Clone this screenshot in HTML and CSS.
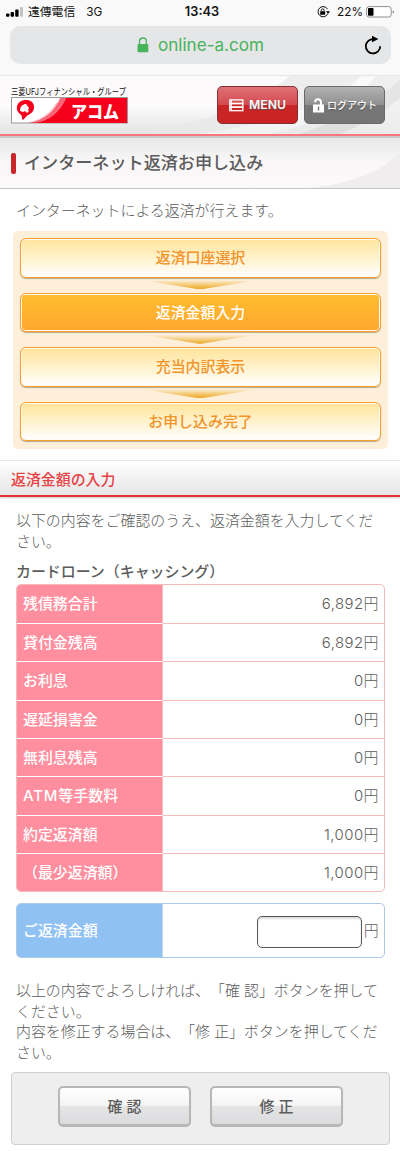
FILE: index.html
```html
<!DOCTYPE html>
<html lang="ja">
<head>
    <meta charset="UTF-8">
    <meta name="viewport" content="width=device-width, initial-scale=1.0">
    <title>インターネット返済お申し込み</title>
    <link rel="stylesheet" href="styles.css">
</head>
<body>

    <!-- Phone status bar -->
    <div class="status">
        <div class="status-left">
            <svg width="18" height="10" viewBox="0 0 18 10">
                <rect x="0" y="6.5" width="3.4" height="3.2" rx="1"/>
                <rect x="4.6" y="5" width="3.4" height="4.7" rx="1"/>
                <rect x="9.2" y="2.5" width="3.4" height="7.2" rx="1"/>
                <rect x="14" y="0" width="3" height="9.7" rx="1" fill="#c4c4c4"/>
            </svg>
            <span class="carrier">遠傳電信</span>
            <span>3G</span>
        </div>
        <div class="clock">13:43</div>
        <div class="status-right">
            <svg width="13" height="12" viewBox="0 0 13 12">
                <path d="M10.6 3.2A5.1 5.1 0 1 0 10.7 8" fill="none" stroke="#111" stroke-width="1"/>
                <path d="M9 5.2h4l-2 2.8z"/>
                <rect x="3.2" y="5.2" width="5" height="3.6" rx=".4"/>
                <path d="M4.3 5.3V4.2a1.4 1.4 0 0 1 2.8 0v1.1" fill="none" stroke="#111" stroke-width=".9"/>
            </svg>
            <span class="percent">22%</span>
            <svg width="29" height="12" viewBox="0 0 29 12">
                <rect x=".6" y=".6" width="24.6" height="10.4" rx="2.5" fill="#fff" stroke="#8f8f8f" stroke-width="1"/>
                <rect x="2" y="2" width="5.5" height="7.8" rx=".8"/>
                <path d="M26.6 4.2q1.5.5 1.5 1.7t-1.5 1.7z" fill="#999"/>
            </svg>
        </div>
    </div>

    <div class="browser">
        <div class="url">
            <svg class="lock" width="12" height="16" viewBox="0 0 12 16">
                <path d="M2.5 8V4.4a3.4 3.4 0 0 1 6.8 0V8" fill="none" stroke="#47b35b" stroke-width="1.3"/>
                <rect x=".5" y="7" width="10.8" height="8.2" rx="1.2" fill="#47b35b"/>
            </svg>
            <span>online-a.com</span>
            <svg class="reload" width="18" height="20" viewBox="0 0 18 20">
                <path d="M9.6 4.1A7.2 7.2 0 1 0 16.2 11.3" fill="none" stroke="#000" stroke-width="1.8"/>
                <path d="M8 .7L14.4 4 8 7.3z"/>
            </svg>
        </div>
    </div>

    <header class="header">
        <svg class="header-bg" width="400" height="58" viewBox="0 0 400 58" preserveAspectRatio="none">
            <defs>
                <linearGradient id="swoosh" x1="0" y1="0" x2="1" y2="1">
                    <stop offset="0" stop-color="#dedede"/>
                    <stop offset="1" stop-color="#f2f2f2"/>
                </linearGradient>
            </defs>
            <path d="M130 58Q240 43 290 0H400V58z" fill="url(#swoosh)"/>
            <path d="M200 58Q320 40 362 0H376Q340 43 270 58z" fill="#fafafa"/>
            <path d="M300 58Q365 35 400 4V22Q370 47 340 58z" fill="#d8d8d8"/>
        </svg>
        <svg class="logo" width="117" height="38" viewBox="0 0 117 38">
            <text class="logo-group" x="0" y="9" textLength="115" lengthAdjust="spacingAndGlyphs">三菱UFJフィナンシャル・グループ</text>
            <rect x=".5" y="11.5" width="116" height="25.5" fill="#fff" stroke="#999"/>
            <path d="M55 12h61v25H24Q46 33 55 12z" fill="#f7001c"/>
            <path d="M49 12h6Q46 33 24 37h-5Q42 32 49 12z" fill="#f7001c" opacity=".6"/>
            <path d="M45 17h3Q40 32 22 37h-6Q37 32 45 17z" fill="#f7001c" opacity=".25"/>
            <path d="M12 34C10 32 12 30 9 28 3 23 6 14 15 14c10 0 10 11 4 14-3 1-4 3-7 6z" fill="#f7001c"/>
            <path d="M9 25c0-5 3-7 6-7l3 4-1 2 1 1-2 2-2-2-2 1z" fill="#fff"/>
            <text class="logo-name" x="60" y="31.5" textLength="48" lengthAdjust="spacingAndGlyphs">アコム</text>
        </svg>
        <a class="nav-btn menu" href="#">
            <svg width="15" height="13" viewBox="0 0 15 13">
                <g fill="none" stroke="#fff" stroke-width="1.3">
                    <rect x=".8" y=".9" width="13" height="3.6"/>
                    <rect x=".8" y="4.5" width="13" height="3.6"/>
                    <rect x=".8" y="8.1" width="13" height="3.6"/>
                    <path d="M2.2 1v11"/>
                </g>
            </svg>
            <span>MENU</span>
        </a>
        <a class="nav-btn logout" href="#">
            <svg width="13" height="15" viewBox="0 0 13 15">
                <path d="M3 4.2Q3.2 1.2 6 1.2t3 3v3" fill="none" stroke="#fff" stroke-width="2"/>
                <rect x="1" y="6.5" width="11" height="8" fill="#fff"/>
                <path d="M6.5 8.5v4" stroke="#777" stroke-width="1.4"/>
            </svg>
            <span>ログアウト</span>
        </a>
    </header>

    <div class="title-bar">
        <svg class="title-bg" width="90" height="50" viewBox="0 0 90 50">
            <path d="M0 50Q68 42 90 13V50z" fill="#efeded"/>
        </svg>
        <h1>インターネット返済お申し込み</h1>
    </div>

    <p class="lead">インターネットによる返済が行えます。</p>

    <ol class="steps">
        <li>返済口座選択</li>
        <li class="current">返済金額入力</li>
        <li>充当内訳表示</li>
        <li>お申し込み完了</li>
    </ol>

    <h2>返済金額の入力</h2>

    <section>
        <p>以下の内容をご確認のうえ、返済金額を入力してください。</p>
        <h3>カードローン（キャッシング）</h3>

        <dl class="table">
            <div><dt>残債務合計</dt><dd>6,892円</dd></div>
            <div><dt>貸付金残高</dt><dd>6,892円</dd></div>
            <div><dt>お利息</dt><dd>0円</dd></div>
            <div><dt>遅延損害金</dt><dd>0円</dd></div>
            <div><dt>無利息残高</dt><dd>0円</dd></div>
            <div><dt><span class="latin">ATM</span>等手数料</dt><dd>0円</dd></div>
            <div><dt>約定返済額</dt><dd>1,000円</dd></div>
            <div><dt>（最少返済額）</dt><dd>1,000円</dd></div>
        </dl>

        <dl class="table amount">
            <div><dt>ご返済金額</dt><dd><input type="text" name="amount">円</dd></div>
        </dl>

        <p class="note">以上の内容でよろしければ、「確 認」ボタンを押して<br>ください。<br>内容を修正する場合は、「修 正」ボタンを押してくだ<br>さい。</p>
    </section>

    <div class="buttons">
        <button type="button" class="btn">確 認</button>
        <button type="button" class="btn">修 正</button>
    </div>

</body>
</html>
```
FILE: styles.css
```css
* {
    box-sizing: border-box;
}
body {
    margin: 0;
    width: 400px;
    height: 1151px;
    overflow: hidden;
    background: #fff;
    color: #5c5c5c;
    font-family: Inter, "Noto Sans CJK JP", sans-serif;
    font-size: 14.93px;
    font-weight: 300;
    line-height: 20.4px;
    text-spacing-trim: space-all;
}
h1, h2, h3, p, ol, dl, dd {
    margin: 0;
    padding: 0;
}
svg {
    display: block;
    flex: none;
}

/* Status bar */
.status {
    height: 26px;
    padding: 0 5px 3px 6px;
    display: grid;
    grid-template-columns: 1fr auto 1fr;
    align-items: center;
    background: #f9f9f9;
    color: #111;
    font-size: 11.8px;
    font-weight: 400;
    line-height: 20px;
}
.status-left, .status-right {
    display: flex;
    align-items: center;
}
.carrier {
    margin: 0 11px 0 4px;
}
.clock {
    padding-left: 3px;
    font-size: 12.8px;
    font-weight: 600;
}
.status-right {
    justify-content: flex-end;
}
.percent {
    margin: 0 3px 0 7px;
}

/* Address bar */
.browser {
    height: 50px;
    padding: 0 9px 0 10px;
    background: #f9f9f9;
    border-bottom: 1px solid #e6e6e8;
}
.url {
    position: relative;
    height: 38px;
    display: flex;
    align-items: center;
    justify-content: center;
    border-radius: 10px;
    background: #e5e6e8;
    color: #47b35b;
    font-size: 17.1px;
    font-weight: 400;
}
.lock {
    margin-right: 9px;
}
.reload {
    position: absolute;
    right: 9px;
    top: 9px;
}

/* Header */
.header {
    position: relative;
    height: 62px;
    padding: 10px 15px 0 11px;
    display: flex;
    align-items: flex-start;
    background: linear-gradient(#fcfafb 50%, #e4e4e4 58px);
    border-bottom: 2px solid #c9c9cb;
    box-shadow: inset 0 -2px #fb7580;
}
.header-bg {
    position: absolute;
    left: 0;
    top: 0;
    opacity: .6;
}
.logo {
    position: relative;
    margin-right: auto;
    overflow: visible;
}
.logo-group {
    font-size: 9px;
    font-weight: 400;
    fill: #111;
}
.logo-name {
    font-size: 17px;
    font-weight: 900;
    fill: #fff;
}
.nav-btn {
    position: relative;
    width: 81px;
    height: 38px;
    display: flex;
    align-items: center;
    justify-content: center;
    gap: 5px;
    border-radius: 5px;
    color: #fff;
    font-size: 11.5px;
    font-weight: 700;
    text-decoration: none;
    text-shadow: 0 1px 1px #555;
}
.menu {
    margin-right: 6px;
    border: 1px solid #813136;
    background: linear-gradient(#df7277, #d3494e 50%, #c92527 50%, #ca2324);
    font-size: 12.2px;
    font-weight: 600;
}
.logout {
    border: 1px solid #6a6a6a;
    background: linear-gradient(#b3b3b3, #8f8f8f 50%, #777 50%, #747474);
    font-size: 10px;
    font-weight: 500;
    gap: 2px;
}

/* Page title */
.title-bar {
    position: relative;
    height: 51px;
    padding-left: 11px;
    display: flex;
    align-items: center;
    background: linear-gradient(#e8e8e8, #f8f6f7 45%, #fbf9fa);
    border-bottom: 1px solid #c6c6c8;
}
.title-bg {
    position: absolute;
    right: 0;
    bottom: 0;
}
h1 {
    position: relative;
    display: flex;
    align-items: center;
    font-size: 17.1px;
    font-weight: 500;
    line-height: 22px;
}
h1::before {
    content: "";
    width: 5px;
    height: 21px;
    margin-right: 8px;
    border-radius: 2px;
    background: #c9262a;
}
.lead {
    padding: 12px 16px 0;
}

/* Steps */
.steps {
    width: 375px;
    height: 218px;
    margin: 10px 0 0 13px;
    padding: 7px 7px 0;
    border-radius: 5px;
    background: #fdefd9;
    list-style: none;
}
.steps li {
    position: relative;
    height: 39.6px;
    margin-bottom: 14.9px;
    border: 1px solid #f5a02c;
    border-radius: 6px;
    background: linear-gradient(#ffe499, #fff);
    box-shadow: inset 0 0 0 1px #fffaf0, 0 1px 1px #b9a98d;
    color: #f0942b;
    font-weight: 500;
    line-height: 39.8px;
    text-align: center;
}
.steps li.current {
    background: linear-gradient(#ffbd30, #ffa62e);
    color: #fff;
}
.steps li:not(:last-child)::after {
    content: "";
    position: absolute;
    left: 124px;
    top: 41px;
    width: 110px;
    height: 9px;
    background: linear-gradient(#fdefd9, #eda822);
    clip-path: polygon(0 0, 100% 0, 50% 100%);
}

/* Section heading */
h2 {
    height: 37px;
    margin-top: 11px;
    padding-left: 11px;
    border-top: 1px solid #e4e4e4;
    border-bottom: 2px solid #df3338;
    background: linear-gradient(#fff, #e6e6e6);
    box-shadow: 0 1px 2px #ccc;
    color: #e84245;
    font-size: 14.93px;
    font-weight: 500;
    line-height: 39px;
}
section {
    padding: 14px 15px 0 16px;
}
h3 {
    margin-top: 10px;
    font-size: 14.93px;
    font-weight: 500;
}

/* Tables */
.table {
    margin-top: 1px;
    border: 1px solid #f7babb;
    border-radius: 5px;
    overflow: hidden;
}
.table div {
    height: 38.35px;
    display: grid;
    grid-template-columns: 146px 1fr;
    line-height: 38.6px;
}
.table dt {
    padding-left: 6px;
    background: #ff8f9e;
    border-right: 1px solid #f7babb;
    color: #fff;
    font-weight: 500;
}
.table dd {
    padding-right: 5px;
    letter-spacing: .45px;
    text-align: right;
}
.table div + div dt {
    border-top: 1px solid #fff;
}
.table div + div dd {
    border-top: 1px solid #f7babb;
}
.latin {
    letter-spacing: .9px;
}
.table.amount {
    margin-top: 11px;
    border-color: #aac8e8;
}
.amount div {
    height: 53px;
    line-height: 55px;
}
.amount dt {
    background: #90c1f3;
    border-color: #c9d8e5;
}
.amount dd {
    display: flex;
    align-items: center;
    justify-content: flex-end;
}
.amount input {
    width: 105px;
    height: 32px;
    margin-right: 2px;
    border: 1px solid #555;
    border-radius: 5px;
    box-shadow: inset 0 2px 2px #ddd;
}
.note {
    margin-top: 23px;
    white-space: nowrap;
}

/* Buttons */
.buttons {
    width: 379px;
    height: 73px;
    margin: 9px 0 0 11px;
    padding: 13px 0 0 46px;
    display: flex;
    align-items: flex-start;
    gap: 19px;
    border: 1px solid #cfcfcf;
    border-radius: 4px;
    background: #eee;
}
.btn {
    width: 133px;
    height: 41px;
    padding: 0 0 2px;
    border: 2px solid #b7b7b7;
    border-bottom-width: 3px;
    border-radius: 5px;
    background: linear-gradient(#fff, #f4f4f4 50%, #e5e5e5 50%, #dadbdd);
    color: #5c5c5c;
    font-family: inherit;
    font-size: 14.93px;
    font-weight: 500;
}
```
